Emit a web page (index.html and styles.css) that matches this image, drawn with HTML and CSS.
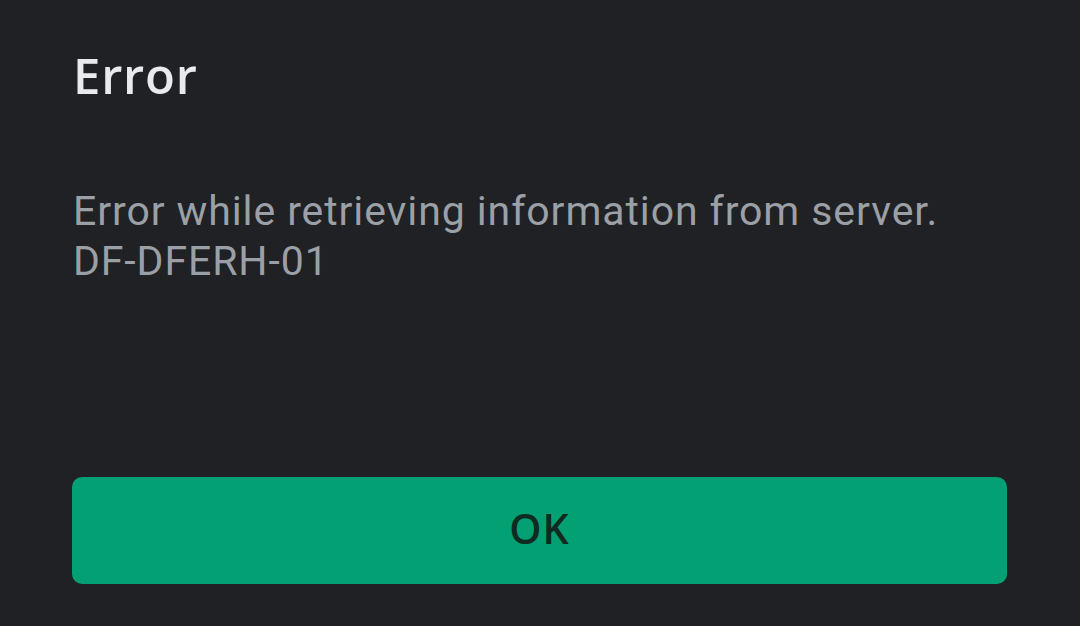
FILE: index.html
```html
<!DOCTYPE html>
<html lang="en">
<head>
<meta charset="utf-8">
<link rel="stylesheet" href="styles.css">
<title>Error</title>
</head>
<body>
<div class="dialog">
  <h1 class="title">Error</h1>
  <p class="message">Error while retrieving information from server.<br>DF-DFERH-01</p>
  <div class="spacer"></div>
  <button class="ok">OK</button>
</div>
</body>
</html>
```

FILE: styles.css
```css
html, body {
  margin: 0;
  padding: 0;
  background: #202124;
  width: 1080px;
  height: 626px;
  overflow: hidden;
}
.dialog {
  display: flex;
  flex-direction: column;
  height: 626px;
  box-sizing: border-box;
  padding: 45px 72px 0 72px;
}
.title {
  margin: 0 0 0 1px;
  font-family: "Open Sans", Roboto, sans-serif;
  font-weight: 600;
  font-size: 49px;
  letter-spacing: 0.8px;
  line-height: 60px;
  color: #e8eaed;
}
.message {
  margin: 81px 0 0 1px;
  font-family: Roboto, "Noto Sans", sans-serif;
  font-weight: 400;
  font-size: 41px;
  letter-spacing: 0.9px;
  line-height: 50px;
  color: #9aa0a6;
}
.spacer {
  flex: 1;
}
.ok {
  margin: 0 0 42px 0;
  padding: 0 0 5px 0;
  width: 935px;
  height: 107px;
  border: none;
  border-radius: 10px;
  background: #03a073;
  color: #0f2a20;
  font-family: "Open Sans", Roboto, sans-serif;
  font-weight: 600;
  font-size: 41px;
  letter-spacing: 1px;
}
```
